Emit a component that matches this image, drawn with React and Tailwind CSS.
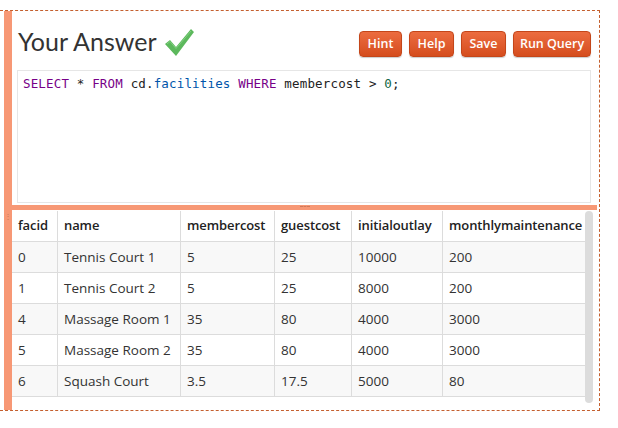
import React from "react";

const rows = [
  ["0", "Tennis Court 1", "5", "25", "10000", "200"],
  ["1", "Tennis Court 2", "5", "25", "8000", "200"],
  ["4", "Massage Room 1", "35", "80", "4000", "3000"],
  ["5", "Massage Room 2", "35", "80", "4000", "3000"],
  ["6", "Squash Court", "3.5", "17.5", "5000", "80"],
];
const heads = ["facid", "name", "membercost", "guestcost", "initialoutlay", "monthlymaintenance"];
const widths = ["w-[45px]", "w-[123px]", "w-[94px]", "w-[77px]", "w-[91px]", "w-[143px]"];

function Btn({ children, w }) {
  return (
    <button
      className={`h-[26px] ${w} rounded-[4px] border border-[#c4461a] bg-gradient-to-b from-[#ec6c3f] to-[#d54d1d] text-white text-[12.5px] font-semibold shadow-[0_1px_1px_rgba(0,0,0,0.2)]`}
      style={{ fontFamily: '"Open Sans", sans-serif' }}
    >
      {children}
    </button>
  );
}

export default function App() {
  return (
    <div className="w-[618px] h-[428px] bg-white overflow-hidden" style={{ fontFamily: '"Open Sans", sans-serif' }}>
      <div className="mt-[10px] w-[600px] h-[401px] border-t border-r border-b border-dashed border-[#c4602f] flex">
        <div className="ml-[4px] w-[8px] bg-[#f79875] flex items-center justify-center">
          <div className="text-[#c87a5a] text-[8px] leading-[3px] mt-[10px]">⋮</div>
        </div>
        <div className="flex-1 flex flex-col">
          <div className="h-[59px] flex items-start">
            <div
              className="ml-[6px] mt-[13px] text-[25px] leading-[34px] text-[#333]"
              style={{ fontFamily: 'Lato, sans-serif' }}
            >
              Your Answer
            </div>
            <svg className="ml-[7px] mt-[17px]" width="31" height="29" viewBox="0 0 31 29">
              <path d="M1 16 L6 12 L12 19 L27 1 L30 4 L12 28 Z" fill="#5cb85c" />
              <path d="M3 16 L6 13.5 L12 20.5 L27 3" stroke="#7fd07f" strokeWidth="1" fill="none" />
            </svg>
            <div className="ml-auto mr-[8px] mt-[20px] flex gap-[7px]">
              <Btn w="w-[43px]">Hint</Btn>
              <Btn w="w-[45px]">Help</Btn>
              <Btn w="w-[45px]">Save</Btn>
              <Btn w="w-[78px]">Run Query</Btn>
            </div>
          </div>
          <div className="ml-[5px] mr-[8px] h-[133px] border border-[#e6e6e6] bg-white">
            <div
              className="pl-[5px] pt-[5px] text-[12.5px] leading-[16px] tracking-[0.16px] text-[#222]"
              style={{ fontFamily: '"DejaVu Sans Mono", monospace' }}
            >
              <span className="text-[#770088]">SELECT</span> * <span className="text-[#770088]">FROM</span>{" "}
              cd.<span className="text-[#0055aa]">facilities</span> <span className="text-[#770088]">WHERE</span>{" "}
              membercost &gt; <span className="text-[#116644]">0</span>;
            </div>
          </div>
          <div className="mt-[2px] h-[5px] mr-[2px] bg-[#f79875] flex justify-center">
            <div className="mt-[1px] w-[10px] border-t border-dashed border-[#d07a5a]" />
          </div>
          <div className="mt-[1px] flex">
            <div className="w-[573px]" style={{ fontFamily: '"Open Sans", sans-serif' }}>
              <div className="flex h-[31px] border-b border-[#dcdcdc] bg-white text-[13px] tracking-[-0.1px] font-semibold text-[#222]">
                {heads.map((h, i) => (
                  <div key={h} className={`${widths[i]} px-[6px] flex items-center whitespace-nowrap ${i > 0 ? "border-l border-[#dcdcdc]" : ""}`}>
                    {h}
                  </div>
                ))}
              </div>
              {rows.map((r, ri) => (
                <div
                  key={ri}
                  className={`flex h-[31px] border-b border-[#dcdcdc] text-[13.5px] text-[#333] ${ri % 2 === 0 ? "bg-[#f8f8f8]" : "bg-white"}`}
                >
                  {r.map((c, i) => (
                    <div key={i} className={`${widths[i]} px-[6px] flex items-center ${i > 0 ? "border-l border-[#dcdcdc]" : ""}`}>
                      {c}
                    </div>
                  ))}
                </div>
              ))}
            </div>
            <div className="w-[8px] h-[192px] rounded-[4px] bg-[#dcdcdc]" />
          </div>
        </div>
      </div>
    </div>
  );
}
